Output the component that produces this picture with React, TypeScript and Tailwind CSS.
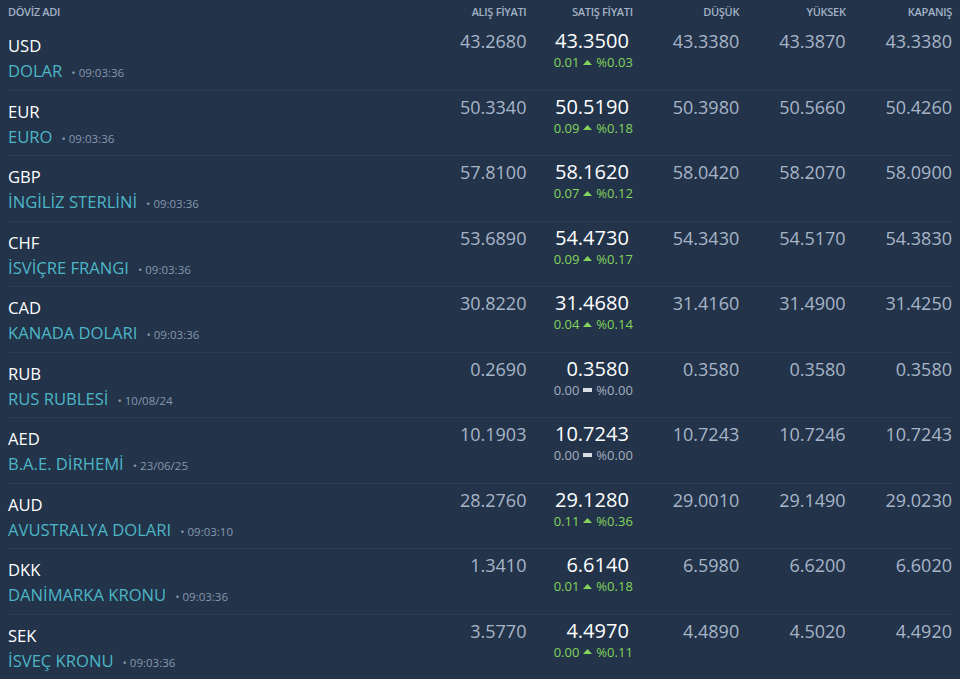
const rows = [
  { code: 'USD', name: 'DOLAR', time: '09:03:36', buy: '43.2680', sell: '43.3500', diff: '0.01', pct: '%0.03', up: true, low: '43.3380', high: '43.3870', close: '43.3380' },
  { code: 'EUR', name: 'EURO', time: '09:03:36', buy: '50.3340', sell: '50.5190', diff: '0.09', pct: '%0.18', up: true, low: '50.3980', high: '50.5660', close: '50.4260' },
  { code: 'GBP', name: 'İNGİLİZ STERLİNİ', time: '09:03:36', buy: '57.8100', sell: '58.1620', diff: '0.07', pct: '%0.12', up: true, low: '58.0420', high: '58.2070', close: '58.0900' },
  { code: 'CHF', name: 'İSVİÇRE FRANGI', time: '09:03:36', buy: '53.6890', sell: '54.4730', diff: '0.09', pct: '%0.17', up: true, low: '54.3430', high: '54.5170', close: '54.3830' },
  { code: 'CAD', name: 'KANADA DOLARI', time: '09:03:36', buy: '30.8220', sell: '31.4680', diff: '0.04', pct: '%0.14', up: true, low: '31.4160', high: '31.4900', close: '31.4250' },
  { code: 'RUB', name: 'RUS RUBLESİ', time: '10/08/24', buy: '0.2690', sell: '0.3580', diff: '0.00', pct: '%0.00', up: false, low: '0.3580', high: '0.3580', close: '0.3580' },
  { code: 'AED', name: 'B.A.E. DİRHEMİ', time: '23/06/25', buy: '10.1903', sell: '10.7243', diff: '0.00', pct: '%0.00', up: false, low: '10.7243', high: '10.7246', close: '10.7243' },
  { code: 'AUD', name: 'AVUSTRALYA DOLARI', time: '09:03:10', buy: '28.2760', sell: '29.1280', diff: '0.11', pct: '%0.36', up: true, low: '29.0010', high: '29.1490', close: '29.0230' },
  { code: 'DKK', name: 'DANİMARKA KRONU', time: '09:03:36', buy: '1.3410', sell: '6.6140', diff: '0.01', pct: '%0.18', up: true, low: '6.5980', high: '6.6200', close: '6.6020' },
  { code: 'SEK', name: 'İSVEÇ KRONU', time: '09:03:36', buy: '3.5770', sell: '4.4970', diff: '0.00', pct: '%0.11', up: true, low: '4.4890', high: '4.5020', close: '4.4920' },
];

const headers = ['ALIŞ FİYATI', 'SATIŞ FİYATI', 'DÜŞÜK', 'YÜKSEK', 'KAPANIŞ'];

export default function App() {
  return (
    <div className="w-[960px] h-[679px] overflow-hidden bg-[#22334a] px-2 font-['Open_Sans',sans-serif]">
      <div className="flex h-[25px] items-center text-[11px] font-semibold text-[#a3b1c4] tracking-[-0.3px]">
        <div className="flex-1">DÖVİZ ADI</div>
        {headers.map((h) => (
          <div key={h} className="w-[106.4px] text-right">{h}</div>
        ))}
      </div>
      {rows.map((r) => (
        <div key={r.code} className="flex h-[65.5px] border-b border-[#2b3c53] pt-[10px]">
          <div className="flex-1">
            <div className="text-[16.6px] leading-[22px] text-white">{r.code}</div>
            <div className="flex items-baseline text-[16.6px] leading-[28px] text-[#4db6c6]">
              {r.name}
              <span className="ml-[9px] text-[11.5px] text-[#8797ad]">• {r.time}</span>
            </div>
          </div>
          <div className="w-[106.4px] -mt-[6px] text-right text-[18px] leading-[24px] text-[#a8b5c7]">{r.buy}</div>
          <div className="w-[106.4px] flex flex-col items-end -mt-[6px]">
            <div className="pr-[4px] text-[20px] leading-[24px] font-medium text-white">{r.sell}</div>
            <div className={`flex items-center gap-[4px] text-[13px] leading-[18px] ${r.up ? 'text-[#84d35b]' : 'text-[#a3afbf]'}`}>
              <span>{r.diff}</span>
              {r.up ? (
                <svg width="9" height="5" viewBox="0 0 9 5"><polygon points="4.5,0 9,5 0,5" fill="#84d35b" /></svg>
              ) : (
                <span className="inline-block w-[9px] h-[4px] bg-[#d8dde4]" />
              )}
              <span>{r.pct}</span>
            </div>
          </div>
          <div className="w-[106.4px] -mt-[6px] text-right text-[18px] leading-[24px] text-[#a8b5c7]">{r.low}</div>
          <div className="w-[106.4px] -mt-[6px] text-right text-[18px] leading-[24px] text-[#a8b5c7]">{r.high}</div>
          <div className="w-[106.4px] -mt-[6px] text-right text-[18px] leading-[24px] text-[#a8b5c7]">{r.close}</div>
        </div>
      ))}
    </div>
  );
}
